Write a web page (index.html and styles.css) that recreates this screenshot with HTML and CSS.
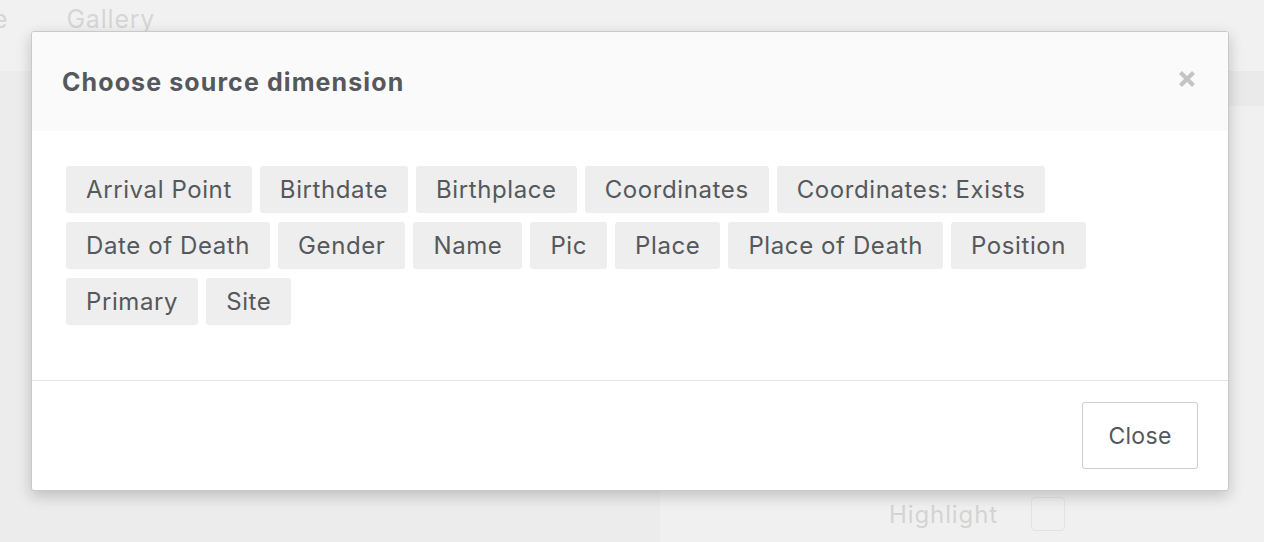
FILE: index.html
```html
<!DOCTYPE html>
<html lang="en">
<head>
<meta charset="utf-8">
<title>Choose source dimension</title>
<link rel="stylesheet" href="styles.css">
</head>
<body>
<div class="page">
  <header class="topbar">
    <span class="nav-item nav-cut">e</span>
    <span class="nav-item">Gallery</span>
  </header>
  <div class="main">
    <div class="left-panel"></div>
    <div class="right-panel">
      <div class="strip"></div>
      <div class="right-fill"></div>
      <div class="highlight-row">
        <span class="highlight-label">Highlight</span>
        <span class="checkbox"></span>
      </div>
    </div>
  </div>
</div>

<div class="modal">
  <div class="modal-header">
    <h4 class="modal-title">Choose source dimension</h4>
    <button class="close" type="button" aria-label="Close">
      <svg width="18" height="18" viewBox="0 0 18 18" aria-hidden="true">
        <path d="M2.5 2.5 L15.5 15.5 M15.5 2.5 L2.5 15.5" stroke="#c4c4c4" stroke-width="4.2" stroke-linecap="butt" fill="none"/>
      </svg>
    </button>
  </div>
  <div class="modal-body">
    <div class="tags">
      <span class="tag">Arrival Point</span>
      <span class="tag">Birthdate</span>
      <span class="tag">Birthplace</span>
      <span class="tag">Coordinates</span>
      <span class="tag">Coordinates: Exists</span>
      <span class="tag">Date of Death</span>
      <span class="tag">Gender</span>
      <span class="tag">Name</span>
      <span class="tag">Pic</span>
      <span class="tag">Place</span>
      <span class="tag">Place of Death</span>
      <span class="tag">Position</span>
      <span class="tag">Primary</span>
      <span class="tag">Site</span>
    </div>
  </div>
  <div class="modal-footer">
    <button class="btn" type="button">Close</button>
  </div>
</div>
</body>
</html>
```

FILE: styles.css
```css
* { box-sizing: border-box; }

html, body {
  margin: 0;
  padding: 0;
  height: 100%;
}

body {
  font-family: Inter, "Liberation Sans", Arial, sans-serif;
  color: #55585c;
  background: #ececec;
  overflow: hidden;
}

.page {
  display: flex;
  flex-direction: column;
  height: 542px;
}

.topbar {
  height: 71px;
  background: #f1f1f1;
  display: flex;
  align-items: flex-start;
  gap: 58px;
  padding-top: 2px;
  margin-left: -7px;
}

.nav-item {
  font-size: 25px;
  line-height: 34px;
  color: #d6d6d6;
  letter-spacing: 0.8px;
}

.main {
  flex: 1;
  display: flex;
}

.left-panel {
  width: 660px;
  background: #ececec;
}

.right-panel {
  flex: 1;
  display: flex;
  flex-direction: column;
  background: #f0f0f0;
}

.strip {
  height: 35px;
  background: #eaeaea;
}

.right-fill { flex: 1; }

.highlight-row {
  display: flex;
  align-items: center;
  gap: 33px;
  padding-left: 229px;
  height: 46px;
  margin-bottom: 5px;
}

.highlight-label {
  font-size: 24px;
  color: #d4d4d4;
  letter-spacing: 0.9px;
}

.checkbox {
  width: 34px;
  height: 34px;
  border: 1px solid #e3e3e3;
  border-radius: 4px;
}

/* Modal */
.modal {
  position: absolute;
  left: 31px;
  top: 31px;
  width: 1198px;
  height: 460px;
  background: #fff;
  border: 1px solid #c9c9c9;
  border-radius: 3px;
  box-shadow: 0 5px 15px rgba(0, 0, 0, 0.2);
  display: flex;
  flex-direction: column;
  overflow: hidden;
}

.modal-header {
  height: 99px;
  background: #fafafa;
  display: flex;
  align-items: center;
  justify-content: space-between;
  padding: 0 32px 0 30px;
}

.modal-title {
  margin: 0;
  font-size: 25px;
  font-weight: 700;
  color: #55585c;
  letter-spacing: 1.1px;
}

.close {
  border: 0;
  background: none;
  padding: 0;
  width: 18px;
  height: 18px;
  display: flex;
  margin-top: -6px;
}

.modal-body {
  flex: 1;
  padding: 35px 34px 0 34px;
}

.tags {
  display: flex;
  flex-wrap: wrap;
  gap: 9px 8px;
}

.tag {
  display: inline-block;
  background: #eeeeee;
  border-radius: 3px;
  padding: 9px 20px;
  font-size: 24px;
  line-height: 29px;
  color: #55585c;
  letter-spacing: 0.6px;
}

.modal-footer {
  border-top: 1px solid #e5e5e5;
  height: 110px;
  display: flex;
  align-items: center;
  justify-content: flex-end;
  padding: 0 30px;
}

.btn {
  font-family: Inter, "Liberation Sans", Arial, sans-serif;
  height: 67px;
  width: 116px;
  background: #fff;
  border: 1px solid #cccccc;
  border-radius: 3px;
  font-size: 23px;
  color: #55585c;
  letter-spacing: 0.3px;
  padding: 0;
}
```
